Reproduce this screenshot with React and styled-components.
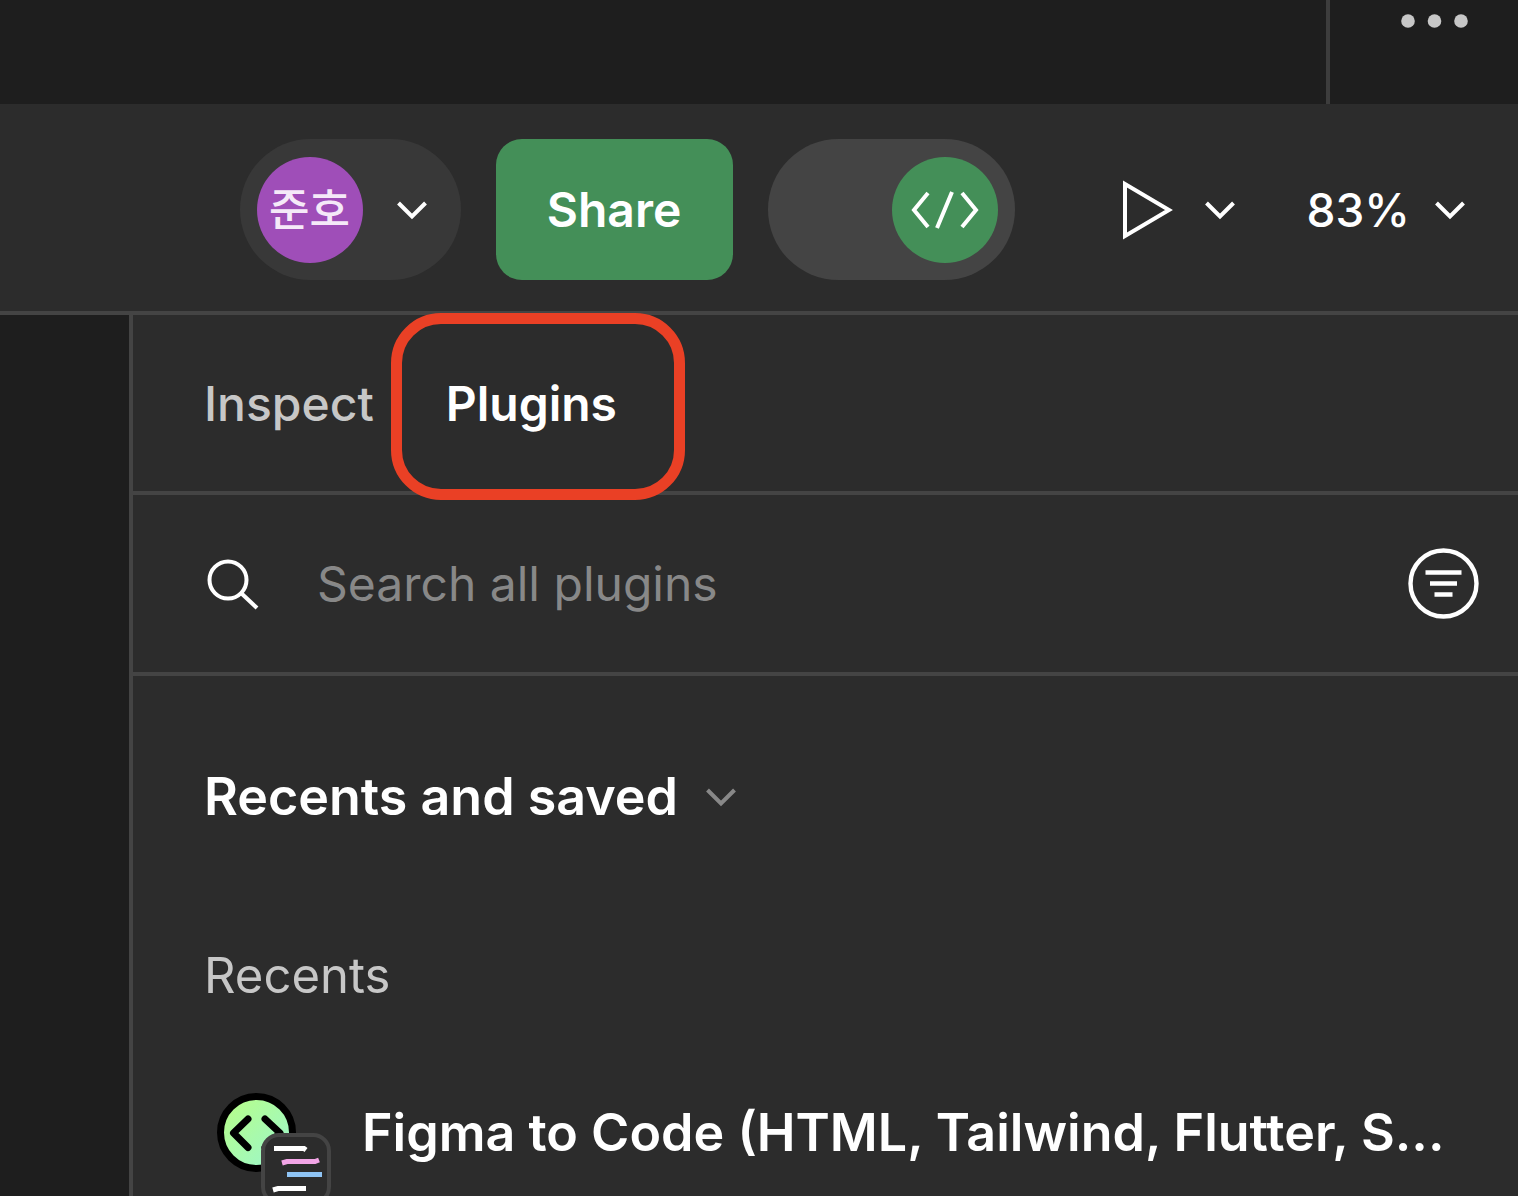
import React, { useState } from "react";
import styled, { createGlobalStyle } from "styled-components";

const GlobalStyle = createGlobalStyle`
  * {
    box-sizing: border-box;
  }
  body {
    margin: 0;
    background-color: #1e1e1e;
    color: #ffffff;
    font-family: Inter, "Noto Sans CJK KR", sans-serif;
    font-size: 48px;
    line-height: 64px;
  }
  button,
  input {
    margin: 0;
    padding: 0;
    border: 0;
    background: none;
    color: inherit;
    font: inherit;
  }
  svg {
    display: block;
    flex-shrink: 0;
    overflow: visible;
  }
`;

const Shell = styled.div`
  display: flex;
  flex-direction: column;
  height: 100vh;
  overflow: hidden;
`;

const TitleBar = styled.div`
  display: flex;
  flex-shrink: 0;
  justify-content: flex-end;
  height: 104px;
`;

const MenuButton = styled.button`
  display: flex;
  align-items: flex-start;
  justify-content: flex-end;
  width: 192px;
  padding: 14px 49px 0 0;
  border-left: 4px solid #3d3d3d;
`;

const Toolbar = styled.header`
  display: flex;
  flex-shrink: 0;
  align-items: center;
  justify-content: flex-end;
  gap: 35px;
  height: 211px;
  padding: 4px 53px 0 32px;
  background-color: #2c2c2c;
  border-bottom: 4px solid #444444;
`;

const UserButton = styled.button`
  display: flex;
  align-items: center;
  gap: 34px;
  height: 141px;
  padding: 0 34px 0 17px;
  border-radius: 71px;
  background-color: #383838;
`;

const Avatar = styled.span`
  display: flex;
  align-items: center;
  justify-content: center;
  width: 106px;
  height: 106px;
  border-radius: 50%;
  background-color: #9f4eb8;
  color: #f5e9f8;
  font-size: 44px;
  font-weight: 500;
`;

const ShareButton = styled.button`
  width: 237px;
  height: 141px;
  border-radius: 26px;
  background-color: #448f58;
  font-weight: 600;
`;

const Toggle = styled.label`
  display: flex;
  align-items: center;
  justify-content: ${(props) => (props.$on ? "flex-end" : "flex-start")};
  width: 247px;
  height: 141px;
  padding: 0 17px;
  border-radius: 71px;
  background-color: #444444;
`;

const ToggleInput = styled.input`
  width: 0;
  height: 0;
  appearance: none;
`;

const Thumb = styled.span`
  display: flex;
  align-items: center;
  justify-content: center;
  width: 106px;
  height: 106px;
  border-radius: 50%;
  background-color: #448f58;
`;

const ToolGroup = styled.div`
  display: flex;
  align-items: center;
  gap: 72px;
  padding-left: 72px;
`;

const ToolButton = styled.button`
  display: flex;
  align-items: center;
  gap: ${(props) => props.$gap}px;
  font-size: 46px;
  font-weight: 500;
`;

const Body = styled.div`
  display: flex;
  flex: 1;
  min-height: 0;
`;

const Canvas = styled.main`
  width: 129px;
  flex-shrink: 0;
`;

const Panel = styled.aside`
  flex: 1;
  min-width: 0;
  background-color: #2c2c2c;
  border-left: 4px solid #444444;
`;

const Tabs = styled.nav`
  display: flex;
  gap: 72px;
  height: 180px;
  padding: 2px 0 0 71px;
  border-bottom: 4px solid #444444;
`;

const Tab = styled.button`
  position: relative;
  color: ${(props) => (props.$active ? "#ffffff" : "#c7c7c7")};
  font-weight: ${(props) => (props.$active ? 600 : 500)};
`;

const Highlight = styled.span`
  position: absolute;
  inset: -4px -68px -9px -55px;
  border: 11px solid #ea4025;
  border-radius: 50px;
  pointer-events: none;
`;

const SearchRow = styled.div`
  display: flex;
  align-items: center;
  gap: 58px;
  height: 181px;
  padding: 0 39px 0 74px;
  border-bottom: 4px solid #444444;
`;

const SearchInput = styled.input`
  flex: 1;
  min-width: 0;
  height: 80px;
  outline: none;
  &::placeholder {
    color: #888888;
    opacity: 1;
  }
`;

const List = styled.section`
  padding: 89px 68px 0 71px;
`;

const SectionButton = styled.button`
  display: flex;
  align-items: center;
  gap: 28px;
  font-size: 52px;
  font-weight: 600;
`;

const GroupTitle = styled.h2`
  margin: 115px 0 85px;
  color: #c7c7c7;
  font-size: 49px;
  font-weight: 400;
`;

const Plugin = styled.a`
  display: flex;
  align-items: flex-start;
  gap: 31px;
  padding-left: 13px;
  color: inherit;
  font-size: 52px;
  font-weight: 600;
  line-height: 80px;
  text-decoration: none;
  white-space: nowrap;
`;

function Chevron({ color = "#ffffff" }) {
  return (
    <svg width="30" height="18" viewBox="0 0 30 18" fill="none" stroke={color} strokeWidth="4">
      <path d="M1.5 2 15 15.5 28.5 2" />
    </svg>
  );
}

function DotsIcon() {
  return (
    <svg width="68" height="14" viewBox="0 0 68 14" fill="#c7c7c7">
      <circle cx="7" cy="7" r="6.8" />
      <circle cx="33.5" cy="7" r="6.8" />
      <circle cx="60" cy="7" r="6.8" />
    </svg>
  );
}

function CodeIcon() {
  return (
    <svg width="68" height="36" viewBox="0 0 68 36" fill="none" stroke="#ffffff" strokeWidth="4">
      <path d="M17 1 3 18 17 35M51 1 65 18 51 35M41 0 26 36" />
    </svg>
  );
}

function PlayIcon() {
  return (
    <svg width="51" height="60" viewBox="0 0 51 60" fill="none" stroke="#ffffff" strokeWidth="4">
      <path d="M3 4V56L47 30Z" />
    </svg>
  );
}

function SearchIcon() {
  return (
    <svg width="52" height="50" viewBox="0 0 52 50" fill="none" stroke="#ffffff" strokeWidth="4">
      <circle cx="21" cy="21" r="18.5" />
      <path d="M34 34 50 49" />
    </svg>
  );
}

function FilterIcon() {
  return (
    <svg width="71" height="71" viewBox="0 0 71 71" fill="none" stroke="#ffffff" strokeWidth="4.4">
      <circle cx="35.5" cy="35.5" r="33" />
      <path d="M17.5 24.5H53.5M22 35.5H49M26.5 46.5H44.5" />
    </svg>
  );
}

function PluginIcon() {
  return (
    <svg width="114" height="114" viewBox="0 0 114 114" fill="none">
      <defs>
        <linearGradient id="plugin-fill" x1="0" y1="0" x2="1" y2="1">
          <stop offset="0" stopColor="#b9ff83" />
          <stop offset="1" stopColor="#99f5d3" />
        </linearGradient>
      </defs>
      <circle cx="39.5" cy="39.5" r="36" fill="url(#plugin-fill)" stroke="#000000" strokeWidth="7" />
      <path
        d="M31 26 16.500 40 31 54.500M48 26 63 40 48 54.500"
        stroke="#000000"
        strokeWidth="7"
        strokeLinecap="round"
        strokeLinejoin="round"
      />
      <rect x="46" y="42" width="66" height="68" rx="16" fill="#2c2c2c" stroke="#444444" strokeWidth="4" />
      <path d="M57 55.500H87L89 57" stroke="#ffffff" strokeWidth="5" />
      <path d="M65 70 70 68.500H98L102 67" stroke="#f2a5e6" strokeWidth="5" />
      <path d="M70 81.500H105" stroke="#8fc4f5" strokeWidth="5" />
      <path d="M56 97 61 95.500H89" stroke="#ffffff" strokeWidth="5" />
    </svg>
  );
}

export default function App() {
  const [devMode, setDevMode] = useState(true);
  const [tab, setTab] = useState("Plugins");

  return (
    <Shell>
      <GlobalStyle />
      <TitleBar>
        <MenuButton aria-label="More">
          <DotsIcon />
        </MenuButton>
      </TitleBar>
      <Toolbar>
        <UserButton>
          <Avatar>준호</Avatar>
          <Chevron />
        </UserButton>
        <ShareButton>Share</ShareButton>
        <Toggle $on={devMode}>
          <ToggleInput
            type="checkbox"
            aria-label="Dev mode"
            checked={devMode}
            onChange={(e) => setDevMode(e.target.checked)}
          />
          <Thumb>
            <CodeIcon />
          </Thumb>
        </Toggle>
        <ToolGroup>
          <ToolButton $gap={32} aria-label="Present">
            <PlayIcon />
            <Chevron />
          </ToolButton>
          <ToolButton $gap={25}>
            83%
            <Chevron />
          </ToolButton>
        </ToolGroup>
      </Toolbar>
      <Body>
        <Canvas />
        <Panel>
          <Tabs>
            {["Inspect", "Plugins"].map((name) => (
              <Tab key={name} $active={tab === name} onClick={() => setTab(name)}>
                {name}
                {tab === name && <Highlight />}
              </Tab>
            ))}
          </Tabs>
          <SearchRow>
            <SearchIcon />
            <SearchInput type="text" aria-label="Search all plugins" placeholder="Search all plugins" />
            <button aria-label="Filter">
              <FilterIcon />
            </button>
          </SearchRow>
          <List>
            <SectionButton>
              Recents and saved
              <Chevron color="#888888" />
            </SectionButton>
            <GroupTitle>Recents</GroupTitle>
            <Plugin href="#">
              <PluginIcon />
              Figma to Code (HTML, Tailwind, Flutter, S...
            </Plugin>
          </List>
        </Panel>
      </Body>
    </Shell>
  );
}
